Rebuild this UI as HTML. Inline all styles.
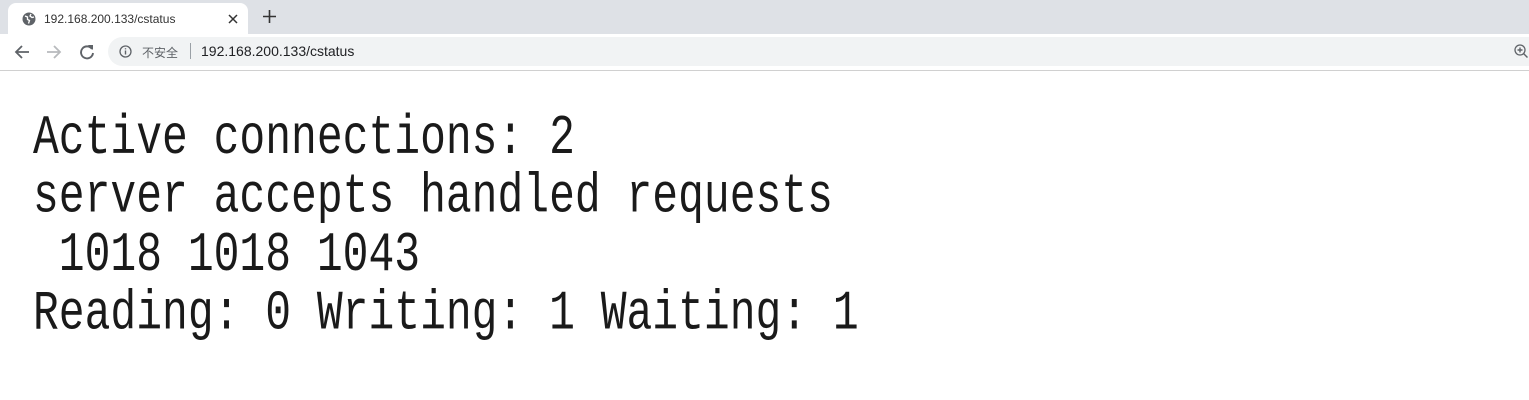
<!DOCTYPE html>
<html><head><meta charset="utf-8"><style>
body{margin:0;width:1529px;height:400px;overflow:hidden;background:#fff;font-family:"Liberation Sans","Noto Sans CJK SC",sans-serif;position:relative}
.strip{position:absolute;left:0;top:0;width:1529px;height:34px;background:#dee1e6}
.tab{position:absolute;left:8px;top:3px;width:240px;height:31px;background:#fff;border-radius:8px 8px 0 0}
.tab .t{position:absolute;left:36px;top:9px;font-size:12px;color:#333}
.omni{position:absolute;left:108px;top:37px;width:1450px;height:29px;background:#f1f3f4;border-radius:15px}
.line{position:absolute;left:0;top:70px;width:1529px;height:1px;background:#d0d0d0}
pre{position:absolute;left:33px;top:109px;margin:0;font-family:"Liberation Mono",monospace;font-size:43px;line-height:45px;color:#1a1a1a;transform:scaleY(1.3);transform-origin:0 0}
</style></head><body>
<div class="strip"></div>
<div class="tab">
<svg style="position:absolute;left:14px;top:9px" width="14" height="14" viewBox="0 0 14 14"><circle cx="7" cy="7" r="6.5" fill="#5f6368"/><path d="M3 4l2.5 1 0 2.5 2 1-1 3M9 2l-1 2 2 1.5 2-.5" stroke="#fff" stroke-width="1.3" fill="none"/></svg>
<span class="t">192.168.200.133/cstatus</span>
<svg style="position:absolute;left:220px;top:11px" width="10" height="10"><path d="M1 1L9 9M9 1L1 9" stroke="#333" stroke-width="1.5"/></svg>
</div>
<svg style="position:absolute;left:263px;top:10px" width="13" height="13"><path d="M6.5 0V13M0 6.5H13" stroke="#333" stroke-width="1.6"/></svg>
<svg style="position:absolute;left:14px;top:44px" width="16" height="16"><path d="M15 8H2M8 2L2 8l6 6" stroke="#5f6368" stroke-width="1.8" fill="none"/></svg>
<svg style="position:absolute;left:46px;top:44px" width="16" height="16"><path d="M1 8H14M8 2l6 6-6 6" stroke="#b8babd" stroke-width="1.8" fill="none"/></svg>
<svg style="position:absolute;left:79px;top:44px" width="16" height="16"><path d="M13 5A6 6 0 1 0 14 9" stroke="#5f6368" stroke-width="1.9" fill="none"/><path d="M9 1h5v5z" fill="#5f6368"/></svg>
<div class="omni"></div>
<svg style="position:absolute;left:119px;top:45px" width="13" height="13"><circle cx="6.5" cy="6.5" r="5.5" stroke="#5f6368" stroke-width="1.3" fill="none"/><path d="M6.5 5.5v4M6.5 3.2v1.2" stroke="#5f6368" stroke-width="1.4"/></svg>
<span style="position:absolute;left:142px;top:44px;font-size:12px;color:#5f6368">不安全</span>
<span style="position:absolute;left:190px;top:43px;width:1px;height:16px;background:#9aa0a6"></span>
<span style="position:absolute;left:201px;top:43px;font-size:14px;color:#202124">192.168.200.133/cstatus</span>
<svg style="position:absolute;left:1514px;top:44px" width="15" height="15"><circle cx="6" cy="6" r="5" stroke="#5f6368" stroke-width="1.3" fill="none"/><path d="M6 3.5v5M3.5 6h5M9.5 9.5l4 4" stroke="#5f6368" stroke-width="1.4"/></svg>
<div class="line"></div>
<pre>Active connections: 2
server accepts handled requests
 1018 1018 1043
Reading: 0 Writing: 1 Waiting: 1</pre>
</body></html>
